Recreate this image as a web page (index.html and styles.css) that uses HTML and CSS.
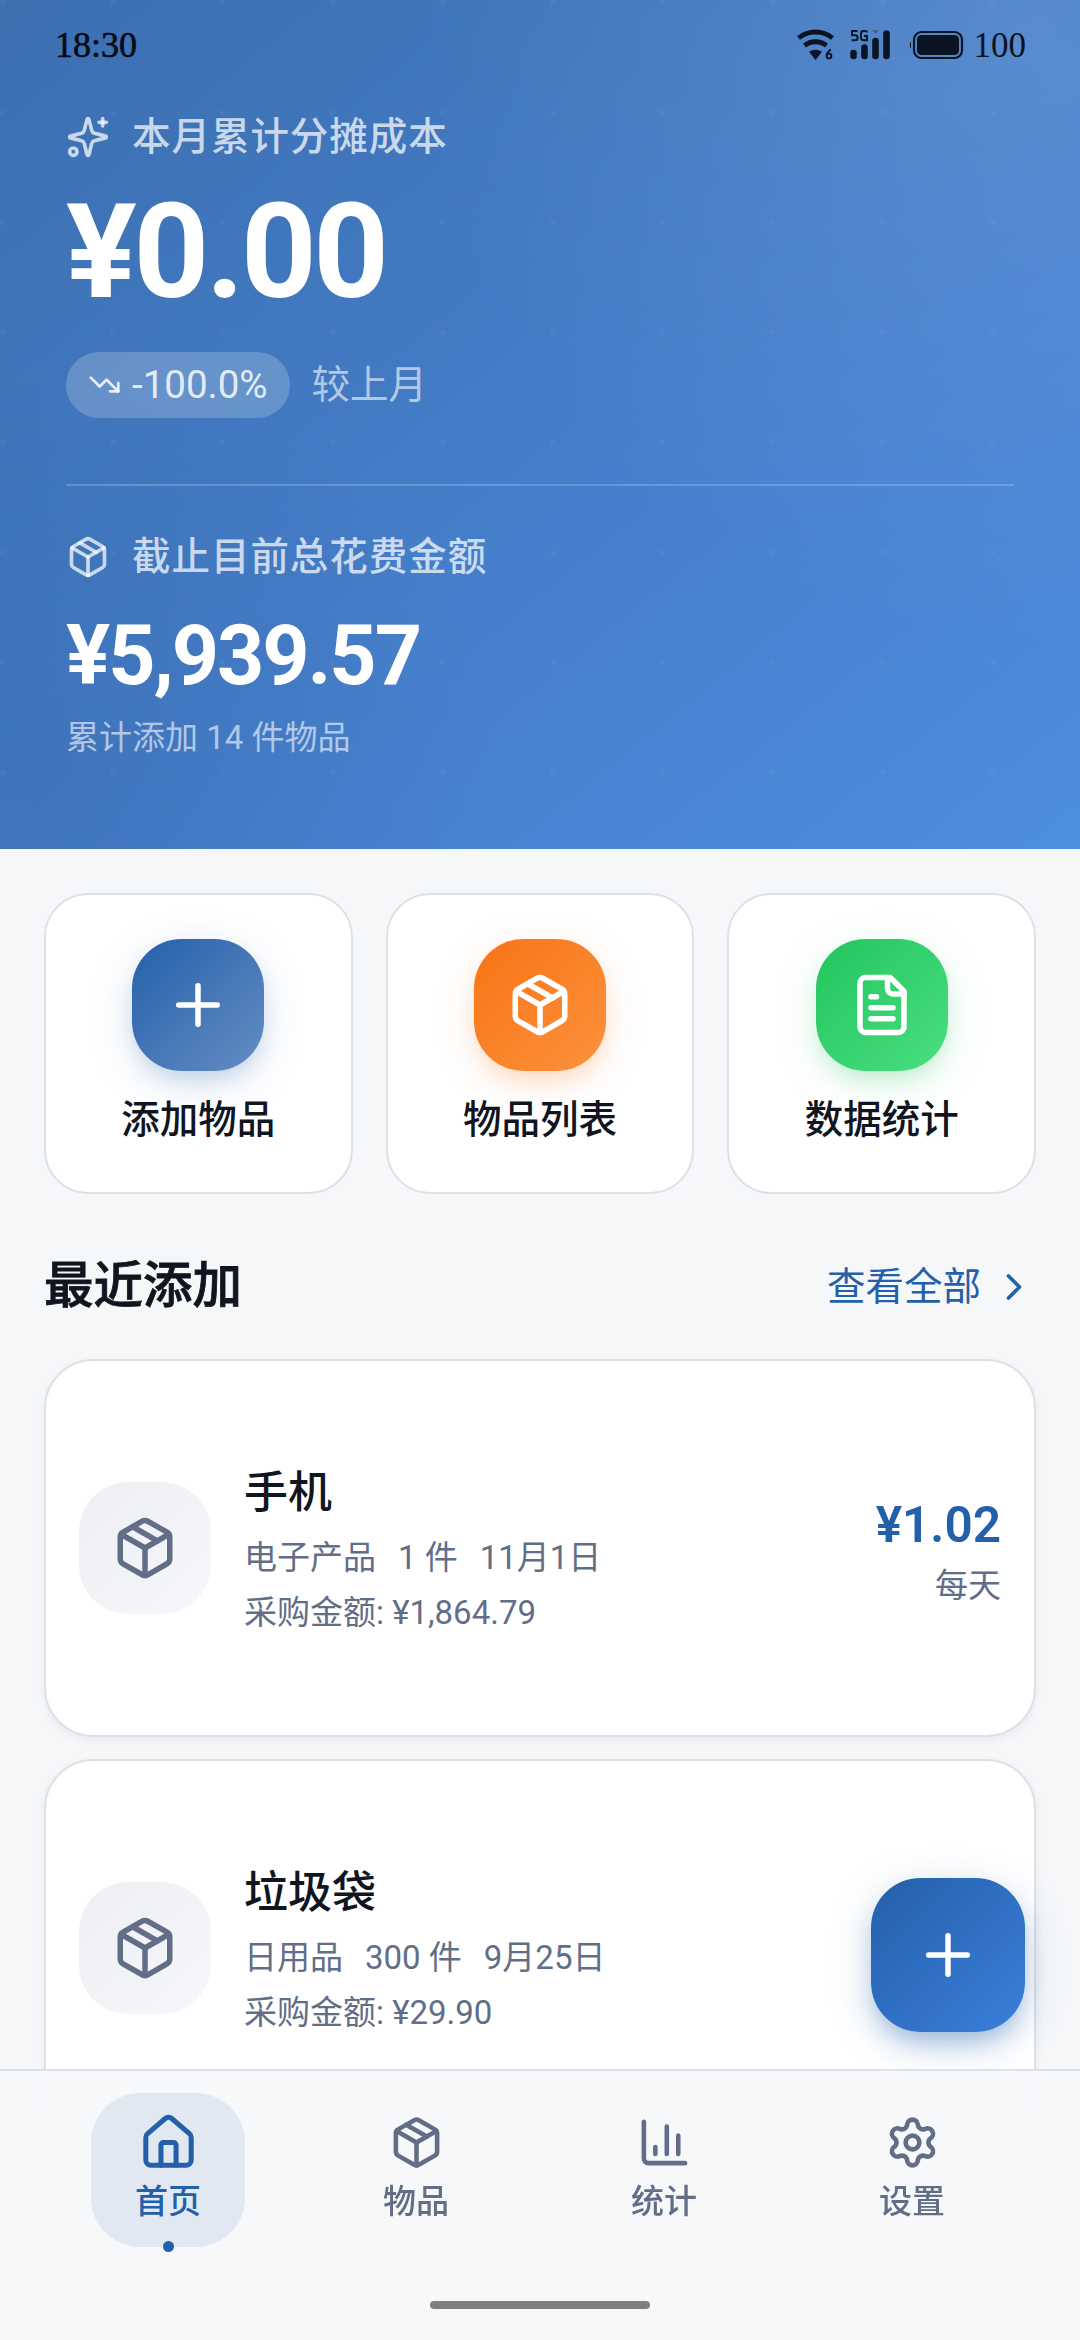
FILE: index.html
```html
<!DOCTYPE html>
<html lang="zh-CN">
<head>
<meta charset="utf-8">
<title>首页</title>
<link rel="stylesheet" href="styles.css">
</head>
<body>
<svg class="sprite" aria-hidden="true">
  <symbol id="package" viewBox="0 0 24 24"><path d="m7.5 4.27 9 5.15"/><path d="M21 8a2 2 0 0 0-1-1.73l-7-4a2 2 0 0 0-2 0l-7 4A2 2 0 0 0 3 8v8a2 2 0 0 0 1 1.73l7 4a2 2 0 0 0 2 0l7-4A2 2 0 0 0 21 16Z"/><path d="m3.3 7 8.7 5 8.7-5"/><path d="M12 22V12"/></symbol>
  <symbol id="plus" viewBox="0 0 24 24"><path d="M5 12h14"/><path d="M12 5v14"/></symbol>
</svg>
<main class="screen">
  <section class="hero">
    <header class="status">
      <span class="status-time">18:30</span>
      <div class="status-icons">
        <svg class="wifi" viewBox="0 0 40 32"><path d="M2.500 9a27 27 0 0 1 34 0" stroke-width="4.800"/><path d="M8.500 16.500a18 18 0 0 1 22 0" stroke-width="4.800"/><path class="solid" d="M19.500 31 13 22.800a11 11 0 0 1 13 0Z"/><path d="M34.800 20.500q-3.800 2.500-4 6" stroke-width="1.900"/><circle cx="33" cy="27" r="2.400" stroke-width="1.900"/></svg>
        <svg class="signal" viewBox="0 0 40 32"><path d="M7.500 2H2v4.200h3.500q2 0 2 1.800v1.500q0 1.700-2 1.700H1.500M17 3.500Q17 2 15 2h-1.500q-2.500 0-2.500 2.500v4.200q0 2.500 2.500 2.500H17V7h-3" stroke-width="1.900"/><path class="faint" d="M22 1h7l-3.500 4Z"/><path d="M3.500 24v3M14.500 18.500V27M25.500 12V27M36.500 4.500V27" stroke-width="6.600" stroke-linecap="round"/></svg>
        <svg class="battery" viewBox="0 0 56 30"><path class="solid" d="M3 11q-2.500 4 0 8Z"/><rect x="6" y="2" width="48" height="26" rx="7.500" stroke-width="2.200"/><rect class="solid" x="9" y="5" width="42" height="20" rx="4.500"/></svg>
        <span class="status-level">100</span>
      </div>
    </header>
    <div class="hero-label">
      <svg class="icon" viewBox="0 0 24 24"><path d="M9.940 15.500A2 2 0 0 0 8.500 14.060l-6.140-1.580a.5.5 0 0 1 0-.960L8.500 9.940A2 2 0 0 0 9.940 8.500l1.580-6.140a.5.5 0 0 1 .960 0l1.580 6.140a2 2 0 0 0 1.440 1.440l6.140 1.580a.5.5 0 0 1 0 .960l-6.140 1.580a2 2 0 0 0-1.440 1.440l-1.580 6.140a.5.5 0 0 1-.960 0z"/><path d="M20 2v4"/><path d="M22 4h-4"/><circle cx="4" cy="20" r="2"/></svg>
      <span>本月累计分摊成本</span>
    </div>
    <div class="hero-amount">¥0.00</div>
    <div class="trend">
      <span class="trend-pill">
        <svg class="icon" viewBox="0 0 24 24"><path d="M16 17h6v-6"/><path d="m22 17-8.500-8.500-5 5L2 7"/></svg>
        <span>-100.0%</span>
      </span>
      <span class="trend-note">较上月</span>
    </div>
    <div class="hero-total">
      <div class="hero-label"><svg class="icon"><use href="#package"/></svg><span>截止目前总花费金额</span></div>
      <div class="total-amount">¥5,939.57</div>
      <div class="total-note">累计添加 14 件物品</div>
    </div>
  </section>

  <section class="content">
    <div class="shortcuts">
      <a class="shortcut"><span class="tile tile-blue"><svg class="icon"><use href="#plus"/></svg></span><span>添加物品</span></a>
      <a class="shortcut"><span class="tile tile-orange"><svg class="icon"><use href="#package"/></svg></span><span>物品列表</span></a>
      <a class="shortcut"><span class="tile tile-green"><svg class="icon" viewBox="0 0 24 24"><path d="M15 2H6a2 2 0 0 0-2 2v16a2 2 0 0 0 2 2h12a2 2 0 0 0 2-2V7Z"/><path d="M14 2v4a2 2 0 0 0 2 2h4"/><path d="M10 9H8"/><path d="M16 13H8"/><path d="M16 17H8"/></svg></span><span>数据统计</span></a>
    </div>
    <div class="section-head">
      <h2>最近添加</h2>
      <a class="more"><span>查看全部</span><svg class="icon" viewBox="0 0 24 24"><path d="m9 18 6-6-6-6"/></svg></a>
    </div>
    <div class="items">
      <article class="item">
        <span class="item-icon"><svg class="icon"><use href="#package"/></svg></span>
        <div class="item-body">
          <h3>手机</h3>
          <div class="meta"><span>电子产品</span><span>1 件</span><span>11月1日</span></div>
          <div class="meta">采购金额: ¥1,864.79</div>
        </div>
        <div class="item-cost"><strong>¥1.02</strong><span>每天</span></div>
      </article>
      <article class="item">
        <span class="item-icon"><svg class="icon"><use href="#package"/></svg></span>
        <div class="item-body">
          <h3>垃圾袋</h3>
          <div class="meta"><span>日用品</span><span>300 件</span><span>9月25日</span></div>
          <div class="meta">采购金额: ¥29.90</div>
        </div>
      </article>
    </div>
  </section>
</main>

<button class="fab" aria-label="添加"><svg class="icon"><use href="#plus"/></svg></button>

<nav class="tabbar">
  <div class="tabs">
    <a class="tab active"><svg class="icon" viewBox="0 0 24 24"><path d="M15 21v-8a1 1 0 0 0-1-1h-4a1 1 0 0 0-1 1v8"/><path d="M3 10a2 2 0 0 1 .709-1.528l7-5.999a2 2 0 0 1 2.582 0l7 5.999A2 2 0 0 1 21 10v9a2 2 0 0 1-2 2H5a2 2 0 0 1-2-2z"/></svg><span>首页</span></a>
    <a class="tab"><svg class="icon"><use href="#package"/></svg><span>物品</span></a>
    <a class="tab"><svg class="icon" viewBox="0 0 24 24"><path d="M3 3v16a2 2 0 0 0 2 2h16"/><path d="M18 17V9"/><path d="M13 17V5"/><path d="M8 17v-3"/></svg><span>统计</span></a>
    <a class="tab"><svg class="icon" viewBox="0 0 24 24"><path d="M9.671 4.136a2.340 2.340 0 0 1 4.659 0 2.340 2.340 0 0 0 3.319 1.915 2.340 2.340 0 0 1 2.330 4.033 2.340 2.340 0 0 0 0 3.831 2.340 2.340 0 0 1-2.330 4.033 2.340 2.340 0 0 0-3.319 1.915 2.340 2.340 0 0 1-4.659 0 2.340 2.340 0 0 0-3.320-1.915 2.340 2.340 0 0 1-2.330-4.033 2.340 2.340 0 0 0 0-3.831A2.340 2.340 0 0 1 6.350 6.051a2.340 2.340 0 0 0 3.319-1.915"/><circle cx="12" cy="12" r="3"/></svg><span>设置</span></a>
  </div>
  <div class="home-bar"></div>
</nav>
</body>
</html>
```
FILE: styles.css
```css
* { box-sizing: border-box; }

body {
  margin: 0;
  height: 2340px;
  overflow: hidden;
  background: #f5f7f9;
  color: #10151f;
  font-family: Roboto, "Noto Sans CJK SC", sans-serif;
  font-size: 38.5px;
  line-height: 55px;
}

h2, h3 { margin: 0; font-weight: 500; }

.sprite { position: absolute; width: 0; height: 0; }

.icon {
  display: block;
  flex: none;
  width: 66px;
  height: 66px;
  fill: none;
  stroke: currentColor;
  stroke-width: 2;
  stroke-linecap: round;
  stroke-linejoin: round;
}

/* Hero */
.hero {
  height: 849px;
  padding: 0 66px;
  color: #fff;
  background:
    radial-gradient(circle at 2.75px 2.75px, rgba(255,255,255,.035) 2.5px, transparent 3.2px) 0 0 / 110px 110px,
    radial-gradient(circle at 1030px 30px, rgba(255,255,255,.11), transparent 620px),
    radial-gradient(circle at 60px 800px, rgba(20,40,80,.09), transparent 440px),
    linear-gradient(141deg, #3d6fb1 0%, #4178bf 34%, #4781cf 65%, #4c8ee0 100%);
}

.status {
  display: flex;
  justify-content: space-between;
  align-items: center;
  height: 109px;
  margin: 0 -12px 0 -11px;
  padding-bottom: 19px;
  color: #060b14;
  font-family: "Liberation Serif", serif;
  font-size: 35px;
}
.status-time { font-size: 36px; -webkit-text-stroke: .6px; }
.status-icons { display: flex; align-items: center; color: #0b1422; }
.status-icons svg { fill: none; stroke: currentColor; }
.status-icons .solid { fill: currentColor; stroke: none; }
.status-icons .faint { fill: #3f6498; stroke: none; }
.wifi { width: 40px; height: 32px; margin-right: 14px; }
.signal { width: 40px; height: 32px; margin-right: 18px; }
.battery { width: 56px; height: 30px; margin-right: 10px; }

.hero-label {
  display: flex;
  align-items: center;
  gap: 22px;
  height: 55px;
  color: rgba(255,255,255,.72);
  font-weight: 500;
  letter-spacing: .96px;
}
.hero-label .icon { width: 44px; height: 44px; }

.hero-amount {
  margin-top: 22px;
  font-size: 132px;
  line-height: 132px;
  font-weight: 700;
  letter-spacing: -3.3px;
}

.trend { display: flex; align-items: center; gap: 22px; margin-top: 34px; line-height: 53px; }
.trend-pill {
  display: flex;
  align-items: center;
  gap: 11px;
  height: 66px;
  padding: 0 22px 2px;
  border-radius: 33px;
  background: rgba(255,255,255,.2);
  color: rgba(255,255,255,.84);
}
.trend-pill .icon { width: 33px; height: 33px; }
.trend-note { padding-bottom: 2px; color: rgba(255,255,255,.6); }

.hero-total {
  margin-top: 66px;
  padding-top: 43px;
  border-top: 2px solid rgba(255,255,255,.2);
}
.total-amount {
  margin-top: 22px;
  font-size: 82.5px;
  line-height: 99px;
  font-weight: 700;
  letter-spacing: -2.06px;
}
.total-note { margin-top: 11px; font-size: 33px; line-height: 44px; color: rgba(255,255,255,.6); }

/* Shortcuts */
.content { padding: 44px 44px 0; }
.shortcuts { display: grid; grid-template-columns: repeat(3, 1fr); gap: 33px; }
.shortcut {
  display: flex;
  flex-direction: column;
  align-items: center;
  gap: 21px;
  padding: 44px 0 45px;
  border: 2px solid #dde0e8;
  border-radius: 44px;
  background: #fff;
  font-weight: 500;
}
.tile {
  display: grid;
  place-items: center;
  width: 132px;
  height: 132px;
  border-radius: 49.5px;
  color: #fff;
}
.tile-blue { background: linear-gradient(135deg, #2460aa, #658dc3); box-shadow: 0 11px 44px rgba(36,96,170,.15), 0 11px 22px -6px rgba(36,96,170,.22); }
.tile-orange { background: linear-gradient(135deg, #f97316, #fb923c); box-shadow: 0 11px 44px rgba(249,115,22,.12), 0 11px 22px -6px rgba(249,115,22,.24); }
.tile-green { background: linear-gradient(135deg, #22c55e, #4ade80); box-shadow: 0 11px 44px rgba(34,197,94,.13), 0 11px 22px -6px rgba(34,197,94,.24); }

/* Recent items */
.section-head {
  display: flex;
  justify-content: space-between;
  align-items: center;
  height: 77px;
  margin: 54px 0 34px;
}
.section-head h2 { font-size: 49.5px; line-height: 77px; -webkit-text-stroke: .8px; }
.more { display: flex; align-items: center; gap: 11px; color: #2460aa; }
.more .icon { width: 44px; height: 44px; }

.items { display: flex; flex-direction: column; gap: 22px; }
.item {
  display: flex;
  align-items: center;
  gap: 33px;
  height: 378px;
  padding: 0 33px;
  border: 2px solid #dde0e8;
  border-radius: 49.5px;
  background: #fff;
  box-shadow: 0 3px 8px rgba(16,24,40,.06);
}
.item-icon {
  display: grid;
  place-items: center;
  width: 132px;
  height: 132px;
  border-radius: 49.5px;
  background: linear-gradient(135deg, #edeff3, #f5f7fa);
  color: #626e87;
}
.item-body { flex: 1; padding-bottom: 1px; }
.item-body h3 { font-size: 44px; line-height: 66px; }
.meta { display: flex; gap: 22px; margin-top: 11px; font-size: 33px; line-height: 44px; color: #626e87; }
h3 + .meta { margin-top: 10px; }
.item-cost { display: flex; flex-direction: column; align-items: flex-end; padding-bottom: 2px; }
.item-cost strong { color: #2460aa; font-size: 49.5px; line-height: 77px; font-weight: 600; }
.item-cost span { font-size: 33px; line-height: 44px; color: #626e87; }

/* Floating action */
.fab {
  position: absolute;
  left: 871px;
  top: 1878px;
  display: grid;
  place-items: center;
  width: 154px;
  height: 154px;
  padding: 0;
  border: 0;
  border-radius: 49.5px;
  background: linear-gradient(135deg, #2460aa, #3b7fdb);
  color: #fff;
  box-shadow: 0 11px 44px rgba(36,96,170,.2), 0 14px 24px -6px rgba(36,96,170,.36);
}

/* Tab bar */
.tabbar {
  position: absolute;
  left: 0;
  right: 0;
  top: 2069px;
  height: 271px;
  padding: 22px 44px 0;
  border-top: 2px solid #dde0e8;
  background: rgba(246,248,250,.93);
  -webkit-backdrop-filter: blur(44px);
  backdrop-filter: blur(44px);
}
.tabs { display: grid; grid-template-columns: repeat(4, 1fr); justify-items: center; }
.tab {
  display: flex;
  flex-direction: column;
  align-items: center;
  gap: 10px;
  width: 154px;
  height: 154px;
  padding-top: 22px;
  border-radius: 49.5px;
  color: #626e87;
  font-size: 33px;
  line-height: 44px;
  font-weight: 500;
}
.tab .icon { width: 55px; height: 55px; }
.tab.active { position: relative; background: #e1e8f2; color: #2460aa; }
.tab.active .icon { transform: scale(1.1); }
.tab.active::after {
  content: "";
  position: absolute;
  left: 71.5px;
  bottom: -5px;
  width: 11px;
  height: 11px;
  border-radius: 50%;
  background: #2460aa;
}
.home-bar { width: 220px; height: 8px; margin: 54px auto 0; border-radius: 4px; background: #7f7f7f; }
```
